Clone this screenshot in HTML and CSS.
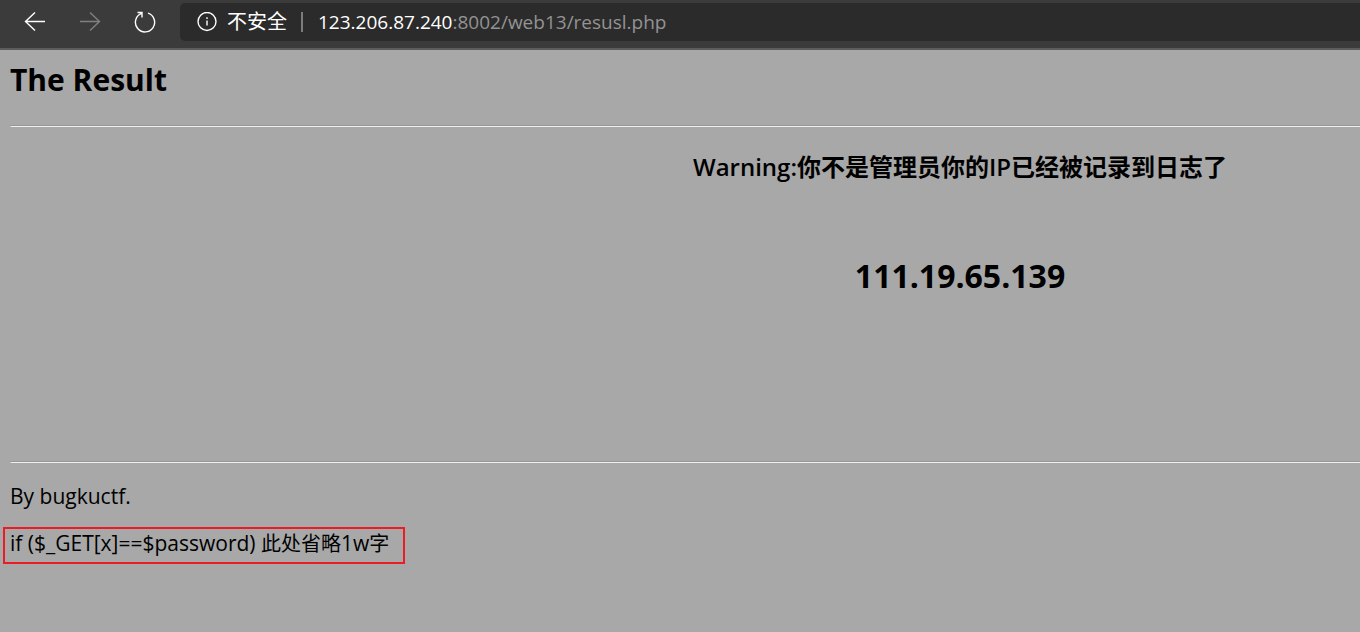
FILE: index.html
```html
<!DOCTYPE html>
<html lang="zh-CN">
<head>
<meta charset="utf-8">
<title>The Result</title>
<link rel="stylesheet" href="styles.css">
</head>
<body>
<header class="toolbar">
  <nav class="nav">
    <button class="nav-button" type="button" aria-label="Back">
      <svg width="22" height="22" viewBox="0 0 22 22"><path d="M21 10.500H1.500M11 1.500L1.500 10.500L11 19.500"/></svg>
    </button>
    <button class="nav-button nav-button-off" type="button" aria-label="Forward" disabled>
      <svg width="22" height="22" viewBox="0 0 22 22"><path d="M1 10.500H20.500M11 1.500L20.500 10.500L11 19.500"/></svg>
    </button>
    <button class="nav-button" type="button" aria-label="Refresh">
      <svg width="22" height="22" viewBox="0 0 22 22"><path d="M14 2.200A9.600 9.600 0 1 1 7.500 2.400M3.500 1.500H8V6.500"/></svg>
    </button>
  </nav>
  <div class="address">
    <button class="security" type="button">
      <svg width="20" height="20" viewBox="0 0 20 20"><circle cx="10" cy="9.500" r="9"/><path d="M10 8.500V13.500M10 5.300V7"/></svg>
      <span>不安全</span>
    </button>
    <span class="divider"></span>
    <div class="url" role="textbox" aria-label="Address" contenteditable="true" spellcheck="false"><span class="host">123.206.87.240</span>:8002/web13/resusl.php</div>
  </div>
</header>
<main class="page">
  <h1 class="title">The Result</h1>
  <hr class="rule">
  <section class="result">
    <h2 class="warning">Warning:你不是管理员你的IP已经被记录到日志了</h2>
    <p class="ip">111.19.65.139</p>
  </section>
  <hr class="rule">
  <p class="text">By bugkuctf.</p>
  <p class="text code">if ($_GET[x]==$password) <span class="note">此处省略</span>1w<span class="note">字</span></p>
</main>
</body>
</html>
```
FILE: styles.css
```css
* {
  box-sizing: border-box;
}

body {
  margin: 0;
  min-height: 100vh;
  background: #a8a8a8;
  color: #000;
  font-family: "Open Sans", "Noto Sans CJK SC", sans-serif;
  font-size: 20px;
  line-height: 28px;
}

.toolbar {
  display: flex;
  align-items: flex-start;
  padding: 3px 0 7px;
  background: #3b3b3b;
  border-bottom: 2px solid #5c5c5c;
}

.nav {
  display: flex;
  gap: 15px;
  padding: 0 15px;
}

.nav-button {
  display: flex;
  align-items: center;
  justify-content: center;
  width: 40px;
  height: 38px;
  padding: 0;
  border: 0;
  background: none;
  color: #fff;
}

.nav-button-off {
  color: #808080;
}

svg {
  fill: none;
  stroke: currentColor;
  stroke-width: 1.4;
}

.address {
  display: flex;
  flex: 1;
  align-items: center;
  height: 38px;
  padding-left: 17px;
  border-radius: 5px 0 0 5px;
  background: #2b2b2b;
  color: #939393;
  white-space: nowrap;
}

.security {
  display: flex;
  align-items: center;
  gap: 10px;
  padding: 0;
  border: 0;
  background: none;
  color: #fff;
  font: inherit;
}

.divider {
  width: 2px;
  height: 20px;
  margin: 0 15px 0 14px;
  background: #7c7c7c;
}

.url {
  flex: 1;
  outline: 0;
  font-size: 19px;
}

.host {
  color: #fff;
}

.page {
  padding: 8px 0 8px 10px;
}

.title {
  margin: 0 0 23px;
  font-size: 30px;
  font-weight: 700;
  line-height: 44px;
}

.rule {
  margin: 0;
  border: 1px solid;
  border-color: #969696 #f0f0f0 #f0f0f0 #969696;
  border-right: 0;
}

.result {
  min-height: 334px;
  padding: 23px 0 0 550px;
  text-align: center;
}

.warning {
  margin: 0 0 70px;
  font-size: 24px;
  font-weight: 600;
  line-height: 34px;
}

.ip {
  margin: 0;
  font-size: 32px;
  font-weight: 700;
  line-height: 44px;
}

.text {
  margin: 19px 0 17px;
  font-size: 21px;
}

.note {
  font-size: 20px;
}

.code {
  width: fit-content;
  margin: 0 0 0 -7px;
  padding: 0 14px 4px 5px;
  border: 2px solid #ed1c24;
}
```
